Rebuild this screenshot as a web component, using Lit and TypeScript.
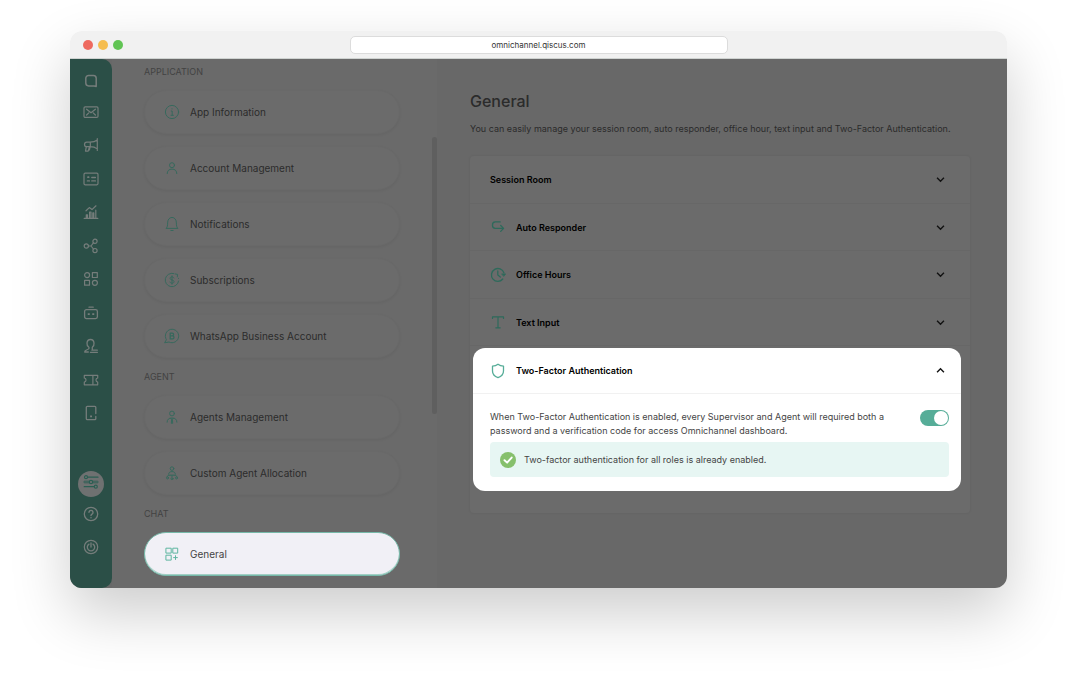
import { LitElement, html, css, svg } from "lit";
import { customElement, state } from "lit/decorators.js";
import { classMap } from "lit/directives/class-map.js";

const icon = (body: unknown, size = 16) => html`<svg
  class="icon"
  width=${size}
  height=${size}
  viewBox="0 0 16 16"
  fill="none"
  stroke="currentColor"
  stroke-linecap="round"
  stroke-linejoin="round"
  aria-hidden="true"
>${body}</svg>`;

const logo = svg`<path stroke-width="1.500" d="M13.200 13.400V5.200a2.800 2.800 0 0 0-2.800-2.800H5.600A2.800 2.800 0 0 0 2.800 5.200v4.900A2.800 2.800 0 0 0 5.600 12.900h5.600z"/>`;

const railIcons = [
  { name: "Inbox", body: svg`<rect x="1" y="2.800" width="14" height="10.600" rx="1.200" stroke-width="1.200"/><path stroke-width="1.200" d="M3.600 5.200 8 8.800l4.400-3.600M3.600 11l2.200-2.200M12.400 11l-2.200-2.200"/>` },
  { name: "Broadcast", body: svg`<path stroke-width="1.200" d="M14.300 1.600v11.800M14.300 3C12 4.800 10 5.100 7 5.100H3.800a2.200 2.200 0 0 0 0 4.600H7c3 0 5 .4 7.300 2.200M7.300 5.200v4.400M3.300 9.800l-.8 4.400h2.700L6.400 9.800M7 10.400l-.6 2.600"/>` },
  { name: "Contacts", body: svg`<rect x="1" y="2.200" width="14" height="11.600" rx="1.200" stroke-width="1.200"/><path stroke-width="1.800" d="M5 6.200h.6"/><path stroke-width="1.400" d="M4.400 9.900h2M8.800 6.500h3.600M8.800 9.900h3.600"/>` },
  { name: "Analytics", body: svg`<path stroke-width="1.200" d="M1.200 14.400h13.600M3.300 14.200v-3.400h1.200v3.400M6.600 14.200V8h1.400v6.200M9.800 14.200V8.900h1v5.300M12.800 14.200V6.200M3 6.800 6.300 3.600l2.700 2L13 1.800"/>` },
  { name: "Integration", body: svg`<circle cx="3.300" cy="8" r="2.100" stroke-width="1.200"/><circle cx="12" cy="3.300" r="2.100" stroke-width="1.200"/><circle cx="12" cy="12.600" r="2.100" stroke-width="1.200"/><path stroke-width="1.200" d="M5.500 8H8l2.400-3.100M8 8l2.400 3"/>` },
  { name: "App center", body: svg`<circle cx="4.100" cy="4.100" r="2.500" stroke-width="1.200"/><rect x="9.400" y="1.600" width="4.900" height="4.900" stroke-width="1.200"/><rect x="1.600" y="9.300" width="4.900" height="4.900" stroke-width="1.200"/><circle cx="11.900" cy="11.800" r="2.500" stroke-width="1.200"/>` },
  { name: "Bot", body: svg`<rect x="1.600" y="4.600" width="12.800" height="9" rx="1.800" stroke-width="1.300"/><path stroke-width="1.300" d="M6 2.200h4.200"/><path stroke-width="1.900" stroke-linecap="square" d="M5.700 9.100h.1M10.200 9.100h.1"/>` },
  { name: "Customers", body: svg`<path stroke-width="1.300" d="M5.900 9.300C4.400 8.300 3.800 6.800 4 5c.2-2 1.600-3.500 3.500-3.500S10.800 3 11 5c.200 1.800-.4 3.300-1.700 4.300v2.100M5.900 9.300c.5 1.400-.4 2-2.400 2.700-1.200.5-1.800 1-1.800 2h3.600M8.900 12.200h5.400M7.400 14.300h7"/>` },
  { name: "Tickets", body: svg`<path stroke-width="1.200" d="M1.300 3.300h13.400v2.600a2.200 2.200 0 0 0 0 4.300v2.600H1.300v-2.600a2.200 2.200 0 0 0 0-4.300zM9.900 3.500v9.200"/>` },
  { name: "Devices", body: svg`<path stroke-width="1.300" d="M12.800 8.500V2.300a1 1 0 0 0-1-1H4.300a1 1 0 0 0-1 1v11.400a1 1 0 0 0 1 1h7.500a1 1 0 0 0 1-1v-2.200"/><path stroke-width="1.800" stroke-linecap="square" d="M8 11.400h.1"/>` },
];

const sliders = svg`<path stroke-width="1.200" d="M4.700 3.200H15M1.200 12.700h9.600"/><circle cx="3" cy="3.200" r="1.500" stroke-width="1.200"/><circle cx="8" cy="8" r="1.700" stroke-width="1.200"/><path d="M5.700 7.200H1.600a.8.800 0 0 0 0 1.600h4.100M10.300 7.200h4.100a.8.800 0 0 1 0 1.600h-4.100" stroke-width=".9"/><circle cx="12.800" cy="12.700" r="1.500" stroke-width="1.200"/>`;
const help = svg`<circle cx="8" cy="8" r="6.700" stroke-width="1.300"/><path stroke-width="1.400" d="M6 6.300a2 2 0 1 1 3 1.800c-.7.400-1 .7-1 1.400M8 11.600v.1"/>`;
const power = svg`<circle cx="8" cy="8" r="6.700" stroke-width="1.200"/><path stroke-width="1.300" d="M6 5.100a3.700 3.700 0 1 0 4 0M8 4v4"/>`;

const sections = [
  {
    title: "APPLICATION",
    items: [
      { label: "App Information", body: svg`<circle cx="8" cy="8" r="6.600"/><path d="M7.200 7H8.200v4.200M7 11.300h2.400M8 4.700v.3"/>` },
      { label: "Account Management", body: svg`<circle cx="8" cy="5.200" r="2.500"/><path d="M3.200 13.600c0-3 1.900-4.500 4.800-4.500s4.800 1.500 4.800 4.500"/>` },
      { label: "Notifications", body: svg`<path d="M2.300 12.100c1.200-1.200 1.300-2.200 1.300-5.200 0-3 1.700-5.500 4.400-5.500s4.400 2.500 4.400 5.500c0 3 .1 4 1.300 5.200zM6.900 14.500h2.200"/>` },
      { label: "Subscriptions", body: svg`<path d="M9.600 1.500a6.700 6.700 0 1 0 5 7.500M11 1.900l2.600.5-.3 2.500M14.500 6.300v.2"/><path d="M9.900 6c-.3-.8-1-1.100-1.900-1.100-1.100 0-1.900.5-1.900 1.500 0 2.100 3.900 1 3.900 3.200 0 1-.8 1.600-2 1.600-1 0-1.700-.4-2-1.200M8 3.800v8.400"/>` },
      { label: "WhatsApp Business Account", body: svg`<path d="M2.200 11.400A6.700 6.700 0 1 1 5 14l-4 .7z"/><path stroke-width="1.300" d="M6.200 5.100h2a1.400 1.400 0 0 1 0 2.800h-2zM6.200 7.900h2.300a1.500 1.500 0 0 1 0 3H6.200z"/>` },
    ],
  },
  {
    title: "AGENT",
    items: [
      { label: "Agents Management", body: svg`<circle cx="8" cy="4.500" r="2.400"/><path d="M3.100 13.200c0-2.700 1.600-4.200 4.900-4.200s4.900 1.500 4.900 4.200M6.700 9.200 8 10.600l1.300-1.400M7.600 10.800 7.300 14.300h1.400l-.3-3.500"/>` },
      { label: "Custom Agent Allocation", body: svg`<circle cx="8" cy="3.600" r="1.800"/><path d="M4.600 9.200C4.800 7.300 6 6.600 8 6.600s3.200.7 3.400 2.600M6 10.200h4M8 10.200v1.600M6 10.200c-2 0-2.800.3-2.800 1.500M10 10.200c2 0 2.800.3 2.800 1.500"/><circle cx="3.500" cy="12.900" r="1"/><circle cx="8" cy="13.700" r="1"/><circle cx="12.500" cy="12.900" r="1"/>` },
    ],
  },
  {
    title: "CHAT",
    items: [
      { label: "General", body: svg`<g stroke-linejoin="miter"><path d="M2.300 2.200h4.900v4.900H2.300zM9.200 2.200h4.500v4.900H9.200zM2.300 9.200h4.900v4.900H2.300zM11.500 9.700v3.800M9.600 11.600h3.800"/></g>` },
    ],
  },
];

const groups = [
  { label: "Session Room", body: null },
  { label: "Auto Responder", body: svg`<path stroke-width="1.300" d="M10.200 2.900H5.200a2.900 2.900 0 0 0-2.700 3v.6a2.900 2.900 0 0 0 2.700 2.900h8M10.700 6.500l2.900 2.900-2.900 3"/>` },
  { label: "Office Hours", body: svg`<path stroke-width="1.300" d="M13.900 5.800A6.400 6.400 0 1 0 12.800 12M7.800 4v4.100l2.500 1.900"/><path fill="currentColor" stroke-width=".8" d="M12 6.900h3.600l-1.700 2.200z"/>` },
  { label: "Text Input", body: svg`<path stroke-width="1.200" d="M2.500 4.500V2.800h11v1.700M8 2.800v10.900M5.800 13.800h4.400"/>` },
];

const shield = svg`<path stroke-width="1.300" d="M8 1.200c1.600 1.200 3.400 1.800 5.500 1.900v5c0 3.200-2.400 5.500-5.500 6.500-3.100-1-5.500-3.300-5.500-6.500v-5C4.600 3 6.400 2.400 8 1.200z"/>`;
const chevronDown = svg`<path stroke-width="2" stroke-linecap="butt" stroke-linejoin="miter" d="M3 5.500l5 5 5-5"/>`;
const chevronUp = svg`<path stroke-width="2" stroke-linecap="butt" stroke-linejoin="miter" d="M3 10.500l5-5 5 5"/>`;

@customElement("app-root")
export class AppRoot extends LitElement {
  @state() private twoFactor = true;

  static styles = css`
    :host {
      display: block;
      font-family: Inter, "Liberation Sans", sans-serif;
      background: #fff;
      color: #000;
    }
    *, *::before, *::after { box-sizing: border-box; }
    button, input { font: inherit; color: inherit; margin: 0; }
    button { background: none; border: 0; padding: 0; text-align: left; cursor: pointer; }
    a { color: inherit; text-decoration: none; }
    h1, h2, p, ul { margin: 0; padding: 0; font-weight: 400; }
    ul { list-style: none; }
    .icon { display: block; flex: none; }

    .stage {
      display: flex;
      min-height: 100vh;
      padding: 31px 70px 109px;
      overflow: hidden;
    }
    .window {
      flex: 1;
      min-width: 0;
      display: flex;
      flex-direction: column;
      border-radius: 12px;
      box-shadow: 0 25px 60px rgba(0, 0, 0, 0.2);
    }
    .titlebar {
      display: grid;
      grid-template-columns: 1fr 378px 1fr;
      align-items: center;
      height: 28px;
      border-bottom: 1px solid #cfd3d1;
      border-radius: 12px 12px 0 0;
      background: #f1f1f1;
    }
    .lights { display: flex; gap: 5px; padding-left: 13px; }
    .light { width: 10px; height: 10px; border-radius: 50%; }
    .close { background: #ee6a5f; }
    .minimize { background: #f5bd4f; }
    .maximize { background: #61c454; }
    .address {
      width: 100%;
      height: 18px;
      padding: 0;
      border: 1px solid #dcdcdc;
      border-radius: 5px;
      background: #fff;
      font-size: 8px;
      text-align: center;
      color: #333;
    }

    .content {
      flex: 1;
      display: flex;
      min-height: 0;
      border-radius: 0 0 12px 12px;
      background: #686868;
    }

    .rail {
      flex: none;
      display: flex;
      flex-direction: column;
      width: 42px;
      padding: 8px 0 25px;
      border-radius: 0 10px 10px 12px;
      background: #2b4f47;
      color: #757d7b;
    }
    .rail-link { display: grid; place-items: center; height: 33px; }
    .rail-item:nth-child(even) .rail-link { height: 34px; }
    .rail-logo { display: grid; place-items: center; height: 28px; }
    .rail-foot { margin-top: auto; }
    .rail-active {
      display: grid;
      place-items: center;
      width: 26px;
      height: 26px;
      margin: 0 auto;
      padding-bottom: 4px;
      border-radius: 50%;
      background: #6f7171;
      color: #2b5f53;
    }

    .settings {
      flex: none;
      display: flex;
      justify-content: space-between;
      width: 325px;
      padding: 6px 0 10px 32px;
      background: #6a6a6a;
    }
    .menu { display: flex; flex-direction: column; gap: 12px; width: 256px; }
    .section { display: flex; flex-direction: column; gap: 12px; }
    .section-title { font-size: 9px; line-height: 13px; color: #424242; }
    .pills { display: flex; flex-direction: column; gap: 12px; }
    .pill {
      display: flex;
      align-items: center;
      gap: 10px;
      height: 44px;
      padding: 0 19px;
      border: 1px solid #696969;
      border-radius: 22px;
      background: #6b6b6b;
      box-shadow: 0 1px 3px rgba(0, 0, 0, 0.06);
      font-size: 10px;
      color: #2b2b2b;
    }
    .pill .icon { color: #37695d; }
    .pill.current {
      border-color: #76b9a9;
      background: #f1f0f6;
      box-shadow: inset 0 -1px 0 #a3cfc5;
      color: #444;
    }
    .pill.current .icon { color: #5eb6a0; }
    .scrollbar { width: 5px; height: 277px; margin-top: 72px; border-radius: 3px; background: #5f5f5f; }

    .main { flex: 1; min-width: 0; padding: 32px 37px 0 33px; }
    .title { font-size: 16px; line-height: 20px; font-weight: 500; color: #2b2b2b; }
    .intro { margin-top: 11px; font-size: 9px; line-height: 14px; color: #2b2b2b; }
    .card {
      margin-top: 20px;
      padding-bottom: 22px;
      border-radius: 4px;
      background: #6b6b6b;
      box-shadow: 0 0 3px rgba(0, 0, 0, 0.08);
    }
    .row {
      display: flex;
      align-items: center;
      gap: 10px;
      width: 100%;
      height: 48px;
      padding: 0 24px 0 20px;
      border-bottom: 1px solid #676767;
      font-size: 9px;
      font-weight: 600;
      color: #000;
    }
    .row:nth-of-type(even) { height: 47px; }
    .row-label { flex: 1; }
    .accent { color: #2e6a5b; }
    .chevron { color: #111; }

    .spotlight {
      margin: 2px 9px 0 3px;
      padding-bottom: 14px;
      border-radius: 12px;
      background: #fff;
    }
    .spotlight .row { height: 46px; padding: 0 15px 0 17px; border-color: #f1f1f1; }
    .spotlight .accent { color: #56ad98; }
    .panel { padding: 16px 12px 0 17px; }
    .setting { display: flex; justify-content: space-between; gap: 24px; }
    .setting-label { font-size: 9px; line-height: 14px; color: #444; max-width: 404px; }
    .switch {
      appearance: none;
      flex: none;
      display: flex;
      width: 29px;
      height: 16px;
      padding: 1px;
      border-radius: 8px;
      background: #b5b5b5;
      cursor: pointer;
    }
    .switch::before { content: ""; width: 14px; height: 14px; border-radius: 50%; background: #fff; }
    .switch:checked { justify-content: flex-end; background: #56ad98; }
    .notice {
      display: flex;
      align-items: center;
      gap: 8px;
      min-height: 35px;
      margin-top: 4px;
      padding: 0 10px;
      border-radius: 4px;
      background: #e7f6f3;
      font-size: 9px;
      color: #444;
    }
    .tick {
      display: grid;
      place-items: center;
      width: 16px;
      height: 16px;
      border-radius: 50%;
      background: #86c06c;
      color: #fff;
    }
  `;

  private renderRow(label: string, body: unknown, open = false) {
    return html`<button class="row" aria-expanded=${open ? "true" : "false"}>
      ${body ? html`<span class="accent">${icon(body)}</span>` : ""}
      <span class="row-label">${label}</span>
      <span class="chevron">${icon(open ? chevronUp : chevronDown, 11)}</span>
    </button>`;
  }

  render() {
    return html`
      <div class="stage">
        <div class="window">
          <header class="titlebar">
            <div class="lights">
              <span class="light close"></span>
              <span class="light minimize"></span>
              <span class="light maximize"></span>
            </div>
            <input class="address" type="text" aria-label="Address" .value=${"omnichannel.qiscus.com"} />
          </header>
          <div class="content">
            <nav class="rail" aria-label="Primary">
              <a class="rail-logo" href="#" aria-label="Home">${icon(logo)}</a>
              <ul>
                ${railIcons.map((r) => html`<li class="rail-item"><a class="rail-link" href="#" aria-label=${r.name}>${icon(r.body)}</a></li>`)}
              </ul>
              <div class="rail-foot">
                <a class="rail-active" href="#" aria-label="Settings" aria-current="page">${icon(sliders)}</a>
                <a class="rail-link" href="#" aria-label="Help">${icon(help)}</a>
                <a class="rail-link" href="#" aria-label="Log out">${icon(power)}</a>
              </div>
            </nav>
            <aside class="settings">
              <nav class="menu" aria-label="Settings">
                ${sections.map((s) => html`
                  <section class="section">
                    <h2 class="section-title">${s.title}</h2>
                    <div class="pills">
                      ${s.items.map((i) => html`<a class=${classMap({ pill: true, current: i.label === "General" })} href="#">${icon(i.body)}<span>${i.label}</span></a>`)}
                    </div>
                  </section>`)}
              </nav>
              <div class="scrollbar"></div>
            </aside>
            <main class="main">
              <h1 class="title">General</h1>
              <p class="intro">You can easily manage your session room, auto responder, office hour, text input and Two-Factor Authentication.</p>
              <div class="card">
                ${groups.map((g) => this.renderRow(g.label, g.body))}
                <section class="spotlight">
                  ${this.renderRow("Two-Factor Authentication", shield, true)}
                  <div class="panel">
                    <div class="setting">
                      <label class="setting-label" for="two-factor">When Two-Factor Authentication is enabled, every Supervisor and Agent will required both a password and a verification code for access Omnichannel dashboard.</label>
                      <input
                        id="two-factor"
                        class="switch"
                        type="checkbox"
                        role="switch"
                        .checked=${this.twoFactor}
                        @change=${(e: Event) => (this.twoFactor = (e.target as HTMLInputElement).checked)}
                      />
                    </div>
                    <p class="notice" role="status">
                      <span class="tick">${icon(svg`<path stroke-width="2.200" d="M4 8.200 7 11l5.200-5.800"/>`, 14)}</span>
                      <span>Two-factor authentication for all roles is already enabled.</span>
                    </p>
                  </div>
                </section>
              </div>
            </main>
          </div>
        </div>
      </div>
    `;
  }
}
